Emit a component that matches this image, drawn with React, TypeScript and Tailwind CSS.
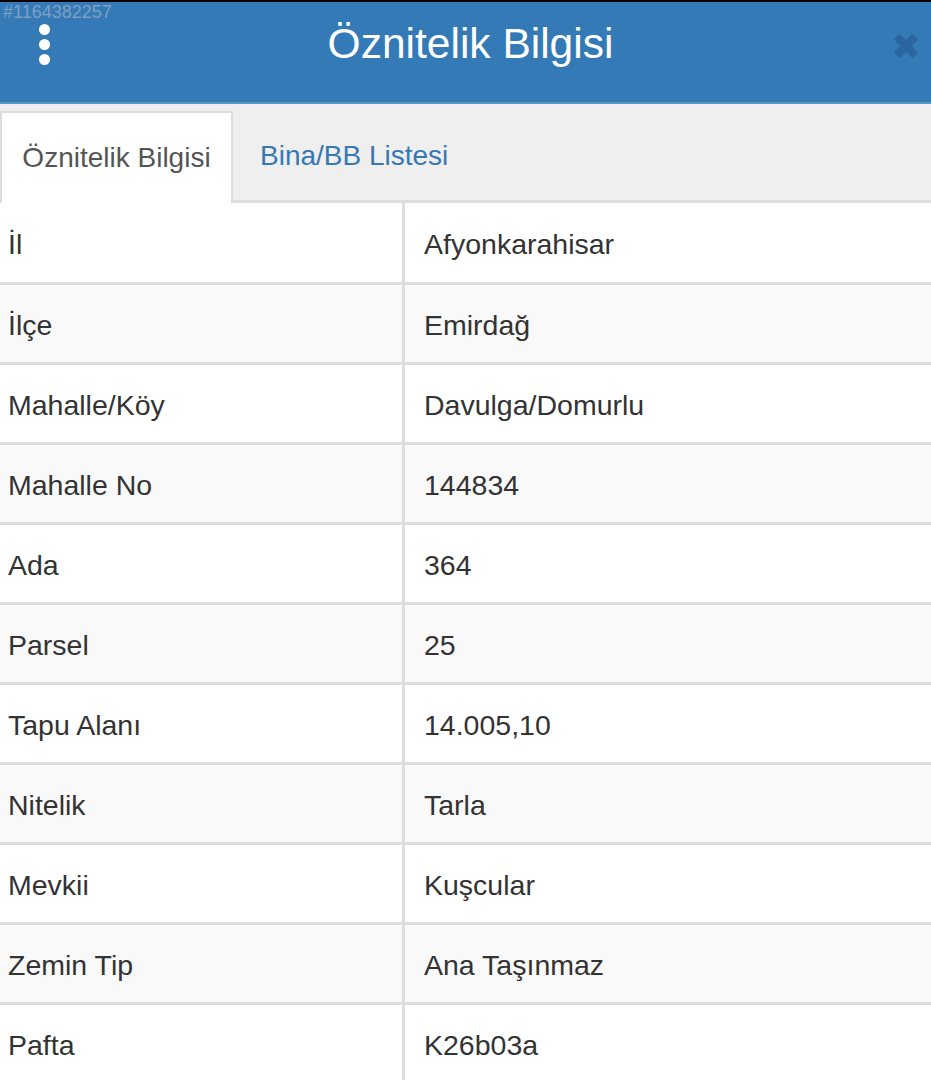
import React from "react";

const ROWS: [string, string][] = [
  ["İl", "Afyonkarahisar"],
  ["İlçe", "Emirdağ"],
  ["Mahalle/Köy", "Davulga/Domurlu"],
  ["Mahalle No", "144834"],
  ["Ada", "364"],
  ["Parsel", "25"],
  ["Tapu Alanı", "14.005,10"],
  ["Nitelik", "Tarla"],
  ["Mevkii", "Kuşcular"],
  ["Zemin Tip", "Ana Taşınmaz"],
  ["Pafta", "K26b03a"],
];

function Header() {
  return (
    <div className="relative h-[104px] border-t-2 border-black bg-[#337ab7]">
      <span className="absolute left-[3px] top-[1px] text-[18px] leading-none text-[#7f9fc3]">#1164382257</span>
      <div className="absolute left-[39px] top-[22px] flex flex-col gap-[4px]">
        <span className="block h-[11px] w-[11px] rounded-full bg-white" />
        <span className="block h-[11px] w-[11px] rounded-full bg-white" />
        <span className="block h-[11px] w-[11px] rounded-full bg-white" />
      </div>
      <h1 className="pl-[10px] pt-[17px] text-center text-[42.5px] font-normal leading-[50px] text-white">Öznitelik Bilgisi</h1>
      <svg className="absolute right-[9px] top-[28px]" width="32" height="32" viewBox="0 0 30 30">
        <path d="M5 9 L9 5 L15 11 L21 5 L25 9 L19 15 L25 21 L21 25 L15 19 L9 25 L5 21 L11 15 Z" fill="#2b66a0" stroke="#2b66a0" strokeWidth="2" strokeLinejoin="round" />
      </svg>
      <div className="absolute bottom-0 left-0 right-0 h-[2px] bg-[#5b95c8]" />
    </div>
  );
}

function Tabs() {
  return (
    <div className="flex h-[99px] items-end border-b-[3px] border-[#dddddd] bg-[#efefef]">
      <div className="-mb-[3px] flex h-[92px] w-[233px] items-center justify-center border-x-2 border-t-2 border-[#dddddd] bg-white text-[28px] text-[#555555]">
        Öznitelik Bilgisi
      </div>
      <div className="flex h-[88px] items-center pl-[27px] text-[28px] text-[#3878b2]">Bina/BB Listesi</div>
    </div>
  );
}

export default function App() {
  return (
    <div className="h-[1080px] w-[931px] overflow-hidden bg-white font-['Liberation_Sans',Arial,sans-serif] text-[#333333]">
      <Header />
      <Tabs />
      <div>
        {ROWS.map(([label, value], i) => (
          <div
            key={label}
            className={`grid grid-cols-[405px_1fr] border-b-[3px] border-[#dddddd] text-[28.5px] ${i === 0 ? "h-[82px]" : "h-[80px]"} ${i % 2 === 1 ? "bg-[#f9f9f9]" : "bg-white"}`}
          >
            <div className="flex items-center border-r-[3px] border-[#dddddd] pl-[8px] pt-[4px]">{label}</div>
            <div className="flex items-center pl-[19px] pt-[4px]">{value}</div>
          </div>
        ))}
      </div>
    </div>
  );
}
